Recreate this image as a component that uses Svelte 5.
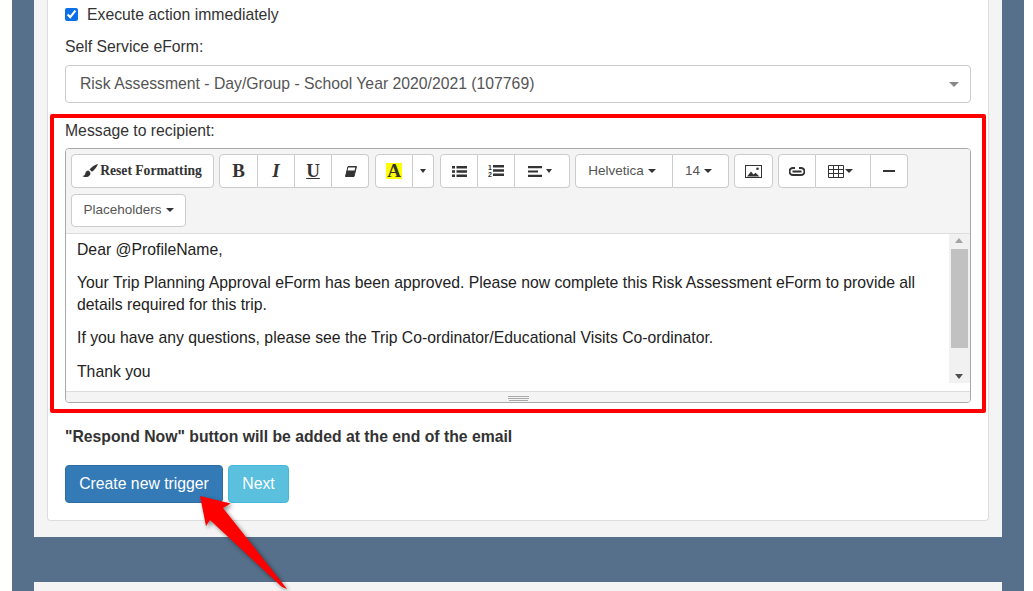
<script lang="ts">
  // Toolbar groups are written out in the markup; only the message text is data.
  const paragraphs = [
    "Dear @ProfileName,",
    "Your Trip Planning Approval eForm has been approved. Please now complete this Risk Assessment eForm to provide all details required for this trip.",
    "If you have any questions, please see the Trip Co-ordinator/Educational Visits Co-ordinator.",
    "Thank you",
  ];
</script>

<div class="page">
  <div class="frame">
    <div class="panel">
      <section class="card">
        <label class="check">
          <input type="checkbox" checked />
          <span>Execute action immediately</span>
        </label>

        <div class="label form-label">Self Service eForm:</div>
        <div class="select">
          <span>Risk Assessment - Day/Group - School Year 2020/2021 (107769)</span>
          <i class="caret grey"></i>
        </div>

        <div class="label msg-label">Message to recipient:</div>
        <div class="editor">
          <div class="toolbar">
            <div class="group">
              <button class="reset" style="width:143px">
                <svg width="18" height="16" viewBox="0 0 18 16"><path d="M17 1c-3 .8-6.500 3-8.500 5.500l2.500 2.300C13.500 6.800 16 4 17 1zM7.500 7.500C5.500 7.500 4.500 9 4.300 10.500 4.100 12 3 12.800 1.500 13c1.500 1.500 5.800 1.500 7.300-.8.900-1.400.800-2.500.200-3.300z" /></svg>
                Reset Formatting
              </button>
            </div>
            <div class="group">
              <button class="serif b" style="width:39px">B</button>
              <button class="serif i" style="width:37px">I</button>
              <button class="serif u" style="width:37px">U</button>
              <button style="width:37px" aria-label="Clear formatting">
                <svg width="13" height="11" viewBox="0 0 13 11"><path d="M4 .5h8.500L10 10.500H1.500z" fill="#333" stroke="#333" /><path d="M4.300 1.500h7l-.7 3H3.600z" fill="#fff" /></svg>
              </button>
            </div>
            <div class="group wide">
              <button class="serif" style="width:38px"><span class="hl">A</span></button>
              <button style="width:21px" aria-label="More colours"><i class="caret small"></i></button>
            </div>
            <div class="group wide">
              <button style="width:38px" aria-label="Bullet list">
                <svg width="15" height="11" viewBox="0 0 15 11"><path d="M0 0h3v2.500H0zM4.500 0H15v2.500H4.500zM0 4.300h3v2.500H0zM4.500 4.300H15v2.500H4.500zM0 8.500h3V11H0zM4.500 8.500H15V11H4.500z" /></svg>
              </button>
              <button style="width:37px" aria-label="Numbered list">
                <svg width="16" height="14" viewBox="0 0 16 14"><text x="0" y="6" class="num">1</text><text x="0" y="13" class="num">2</text><path d="M5 1h11v2.500H5zM5 5.300h11v2.500H5zM5 9.500h11V12H5z" /></svg>
              </button>
              <button class="nudge" style="width:55px" aria-label="Align">
                <svg width="14" height="11" viewBox="0 0 14 11"><path d="M0 0h14v2.200H0zM0 4.400h10v2.200H0zM0 8.800h14V11H0z" /></svg>
                <i class="caret small"></i>
              </button>
            </div>
            <div class="group">
              <button class="txt nudge" style="width:98px">Helvetica<i class="caret"></i></button>
              <button class="txt nudge" style="width:56px">14<i class="caret"></i></button>
            </div>
            <div class="group">
              <button style="width:39px" aria-label="Picture">
                <svg width="17" height="13" viewBox="0 0 17 13"><path d="M0 0h17v13H0zM1 1v11h15V1z" fill-rule="evenodd" /><path d="M2 11.500l4-5 2.500 3 2-1.800 4 3.800z" /><circle cx="12.500" cy="3.800" r="1.300" /></svg>
              </button>
            </div>
            <div class="group">
              <button style="width:38px" aria-label="Link">
                <svg width="16" height="9" viewBox="0 0 16 9"><path d="M6 1H4a3.500 3.500 0 0 0 0 7h8a3.500 3.500 0 0 0 0-7h-2M3.500 4.500h9" fill="none" stroke="#333" stroke-width="2" /></svg>
              </button>
              <button class="tight" style="width:55px" aria-label="Table">
                <svg width="16" height="13" viewBox="0 0 16 13"><path d="M.5.500h15v12H.5zM.5 4.500h15M.5 8.500h15M5.500.500v12M10.500.500v12" fill="none" stroke="#333" /></svg>
                <i class="caret"></i>
              </button>
              <button style="width:37px" aria-label="Horizontal rule">
                <svg width="12" height="2" viewBox="0 0 12 2"><path d="M0 0h12v2H0z" /></svg>
              </button>
            </div>
            <div class="group">
              <button class="txt placeholders" style="width:115px">Placeholders<i class="caret"></i></button>
            </div>
          </div>

          <div class="body">
            <div class="content">
              {#each paragraphs as p}
                <p>{p}</p>
              {/each}
            </div>
            <div class="scroll">
              <i class="arrow up"></i>
              <div class="thumb"></div>
              <i class="arrow down"></i>
            </div>
          </div>
          <div class="resize"><span></span></div>
        </div>

        <p class="note">"Respond Now" button will be added at the end of the email</p>

        <div class="actions">
          <button class="btn primary">Create new trigger</button>
          <button class="btn info">Next</button>
        </div>
      </section>
    </div>
    <div class="panel next"></div>
  </div>

  <!-- Annotations drawn over the screenshot -->
  <div class="redbox"></div>
  <svg class="pointer" width="110" height="110" viewBox="0 0 110 110">
    <path d="M10 6 40.700 13.500 33 18 97 99 92 97 20 30 16 36z" fill="#f00" />
  </svg>
</div>

<style>
  :global(body) {
    margin: 0;
    background: #fff;
  }
  .page {
    position: relative;
    width: 1033px;
    height: 591px;
    overflow: hidden;
    font-family: "Liberation Sans", Arial, sans-serif;
    font-size: 15.75px;
    line-height: 22px;
    color: #333;
  }
  .frame {
    margin-left: 12px;
    width: 968px;
    height: 591px;
    padding: 0 22px;
    background: #566f8a;
    display: flex;
    flex-direction: column;
    gap: 45px;
  }
  .panel {
    height: 537px;
    flex: none;
    box-sizing: border-box;
    padding: 0 13px;
    background: #f4f4f4;
  }
  .panel.next {
    height: 60px;
  }
  .card {
    height: 521px;
    box-sizing: border-box;
    padding: 0 17px;
    background: #fff;
    border: 1px solid #ddd;
    border-top: 0;
    border-radius: 0 0 4px 4px;
  }
  .check {
    display: flex;
    align-items: center;
    gap: 9px;
    height: 29px;
  }
  .check input {
    width: 13px;
    height: 13px;
    margin: 0;
    accent-color: #0b6fe8;
  }
  .label {
    height: 22px;
  }
  .form-label {
    margin-top: 7px;
  }
  .select {
    box-sizing: border-box;
    height: 38px;
    margin-top: 7px;
    padding: 0 11px 0 14px;
    display: flex;
    align-items: center;
    justify-content: space-between;
    border: 1px solid #ccc;
    border-radius: 4px;
    color: #555;
  }
  .msg-label {
    margin-top: 17px;
  }
  .caret {
    display: inline-block;
    vertical-align: middle;
    width: 0;
    height: 0;
    border-top: 4px solid #333;
    border-left: 4px solid transparent;
    border-right: 4px solid transparent;
  }
  .caret.grey {
    border-top-color: #888;
    border-top-width: 5px;
    border-left-width: 5px;
    border-right-width: 5px;
  }
  .caret.small {
    border-left-width: 3.5px;
    border-right-width: 3.5px;
  }
  .editor {
    box-sizing: border-box;
    height: 255px;
    margin-top: 6px;
    border: 1px solid #a9a9a9;
    border-radius: 4px;
    display: flex;
    flex-direction: column;
  }
  .toolbar {
    height: 85px;
    flex: none;
    box-sizing: border-box;
    padding: 5px 0 0 5px;
    background: #f4f4f4;
    border-bottom: 1px solid #ddd;
    border-radius: 3px 3px 0 0;
    display: flex;
    flex-wrap: wrap;
    align-content: flex-start;
    column-gap: 5px;
    row-gap: 6px;
  }
  .group {
    display: flex;
    height: 34px;
  }
  .group.wide {
    margin-left: 1px;
  }
  .group button {
    box-sizing: border-box;
    height: 34px;
    margin: 0;
    padding: 0;
    display: flex;
    align-items: center;
    justify-content: center;
    gap: 4px;
    background: #fff;
    border: 1px solid #ccc;
    border-left: 0;
    font: inherit;
    font-size: 13.5px;
    color: #333;
  }
  .group button:first-child {
    border-left: 1px solid #ccc;
    border-radius: 4px 0 0 4px;
  }
  .group button:last-child {
    border-radius: 0 4px 4px 0;
  }
  .group button:only-child {
    border-radius: 4px;
  }
  .group button.nudge {
    padding-right: 4px;
  }
  .group button.tight {
    gap: 1px;
    padding-right: 5px;
  }
  .group button.placeholders {
    height: 33px;
    padding-bottom: 2px;
  }
  .group svg {
    fill: #333;
    display: block;
  }
  .group .txt {
    color: #555;
  }
  .group .reset {
    gap: 1px;
    padding-right: 2px;
    font-family: "Liberation Serif", serif;
    font-weight: bold;
    font-size: 13.6px;
  }
  .group .serif {
    font-family: "Liberation Serif", serif;
    font-weight: bold;
    font-size: 19px;
  }
  .group .i {
    font-style: italic;
  }
  .group .u {
    text-decoration: underline;
  }
  .hl {
    background: #ff0;
    padding: 0 1px;
    line-height: 16px;
  }
  .num {
    font-family: "Liberation Sans", Arial, sans-serif;
    font-size: 7px;
    font-weight: bold;
  }
  .body {
    height: 157px;
    flex: none;
    display: flex;
    align-items: flex-start;
    overflow: hidden;
    background: #fff;
  }
  .content {
    flex: 1;
    min-width: 0;
    padding: 5px 11px 0;
    color: #222;
  }
  .content p {
    margin: 0 0 11px;
  }
  .content p:last-child {
    margin-top: 12px;
  }
  .scroll {
    width: 21px;
    height: 149px;
    flex: none;
    box-sizing: border-box;
    background: #f1f1f1;
    padding: 15px 2px 0;
    position: relative;
  }
  .thumb {
    height: 99px;
    background: #c1c1c1;
  }
  .arrow {
    position: absolute;
    left: 6px;
    width: 0;
    height: 0;
    border-left: 4.500px solid transparent;
    border-right: 4.500px solid transparent;
  }
  .arrow.up {
    top: 4px;
    border-bottom: 5px solid #a3a3a3;
  }
  .arrow.down {
    bottom: 4px;
    border-top: 5px solid #505050;
  }
  .resize {
    flex: 1;
    background: #f4f4f4;
    border-top: 1px solid #ddd;
    border-radius: 0 0 3px 3px;
    display: flex;
    align-items: center;
    justify-content: center;
  }
  .resize span {
    width: 21px;
    height: 1px;
    border-top: 1px solid #a9a9a9;
    border-bottom: 1px solid #a9a9a9;
    box-shadow: 0 3px 0 -1px #a9a9a9;
  }
  .note {
    margin: 23px 0 0;
    font-weight: bold;
  }
  .actions {
    display: flex;
    gap: 5px;
    margin-top: 17px;
  }
  .btn {
    box-sizing: border-box;
    height: 38px;
    margin: 0;
    padding: 0;
    white-space: nowrap;
    border: 1px solid;
    border-radius: 4px;
    font: inherit;
    color: #fff;
  }
  .primary {
    width: 158px;
    background: #337ab7;
    border-color: #2e6da4;
  }
  .info {
    width: 61px;
    background: #5bc0de;
    border-color: #46b8da;
  }
  .redbox {
    position: absolute;
    left: 50px;
    top: 114px;
    width: 928px;
    height: 291px;
    border: 4px solid #f00;
    border-radius: 2px;
  }
  .pointer {
    position: absolute;
    left: 190px;
    top: 490px;
    filter: drop-shadow(2px 2px 2px rgba(0, 0, 0, 0.45));
  }
</style>
